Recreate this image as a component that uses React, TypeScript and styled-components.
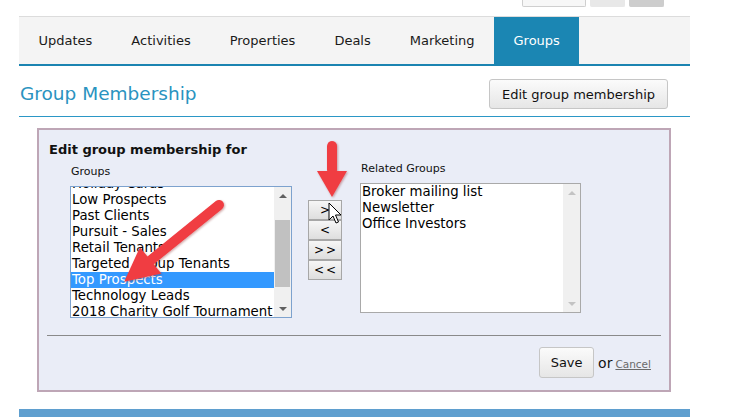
import React from "react";
import styled, { createGlobalStyle } from "styled-components";

const Global = createGlobalStyle`
  html, body { margin: 0; padding: 0; background: #ffffff; }
  body { font-family: Verdana, "DejaVu Sans", sans-serif; color: #111; }
  * { box-sizing: border-box; }
`;

const Page = styled.div`
  position: relative;
  width: 750px;
  height: 417px;
  overflow: hidden;
  padding-left: 19px;
`;

const Content = styled.div`
  width: 671px;
`;

const TopStrip = styled.div`
  height: 16px;
  display: flex;
  justify-content: flex-end;
  gap: 4px;
  padding-right: 26px;
`;

const MiniBtn = styled.div<{ $w: number; $bg: string; $border?: string }>`
  width: ${(p) => p.$w}px;
  height: 7px;
  background: ${(p) => p.$bg};
  border: 1px solid ${(p) => p.$border || p.$bg};
  border-top: none;
  border-radius: 0 0 2px 2px;
`;

const TabBar = styled.nav`
  display: flex;
  background: #f4f4f4;
  border-top: 1px solid #dcdcdc;
  border-bottom: 2px solid #1b84b1;
`;

const Tab = styled.div<{ $active?: boolean }>`
  height: 47px;
  line-height: 47px;
  padding: 0 19.5px;
  font-size: 13px;
  color: ${(p) => (p.$active ? "#ffffff" : "#1a1a1a")};
  background: ${(p) => (p.$active ? "#1b86b3" : "transparent")};
`;

const HeadingRow = styled.div`
  height: 51px;
  display: flex;
  justify-content: space-between;
  align-items: flex-start;
  border-bottom: 1px solid #2b97c6;
`;

const Heading = styled.h2`
  margin: 0;
  padding: 16px 0 0 1px;
  font-size: 18.5px;
  line-height: 24px;
  font-weight: normal;
  color: #2a93c0;
`;

const GreyButton = styled.button<{ $h: number; $w?: number }>`
  font-family: Verdana, "DejaVu Sans", sans-serif;
  font-size: 13px;
  color: #111;
  height: ${(p) => p.$h}px;
  ${(p) => (p.$w ? `width: ${p.$w}px;` : "padding: 0 12px;")}
  background: linear-gradient(#fbfbfb, #e6e6e6);
  border: 1px solid #c6c6c6;
  border-radius: 3px;
  cursor: pointer;
`;

const HeaderButton = styled(GreyButton)`
  margin: 13px 22px 0 0;
`;

const Panel = styled.section`
  margin: 11px 0 0 18px;
  width: 634px;
  height: 264px;
  background: #eaedf7;
  border: 2px solid #bea6b6;
  padding: 12px 7px 0 10px;
`;

const PanelTitle = styled.div`
  font-size: 13px;
  font-weight: bold;
  line-height: 16px;
`;

const PickRow = styled.div`
  display: flex;
  align-items: flex-start;
  margin: 2px 0 0 21px;
`;

const Column = styled.div<{ $top: number; $w: number; $left?: number }>`
  padding-top: ${(p) => p.$top}px;
  margin-left: ${(p) => p.$left || 0}px;
  width: ${(p) => p.$w}px;
  display: flex;
  flex-direction: column;
  gap: 7px;
`;

const FieldLabel = styled.div`
  font-size: 11px;
  line-height: 14px;
  padding-left: 1px;
`;

const ListBox = styled.div<{ $h: number; $focus?: boolean }>`
  position: relative;
  height: ${(p) => p.$h}px;
  background: #fff;
  border: 1px solid ${(p) => (p.$focus ? "#7da2ce" : "#a9a9a9")};
  display: flex;
  overflow: hidden;
`;

const Items = styled.div<{ $offset: number }>`
  flex: 1;
  min-width: 0;
  margin-top: ${(p) => p.$offset}px;
`;

const Item = styled.div<{ $sel?: boolean }>`
  height: 16px;
  line-height: 16px;
  font-size: 13.3px;
  padding-left: 1px;
  white-space: nowrap;
  overflow: hidden;
  color: ${(p) => (p.$sel ? "#fff" : "#000")};
  background: ${(p) => (p.$sel ? "#3399ff" : "transparent")};
`;

const ScrollBar = styled.div`
  width: 17px;
  flex: none;
  background: #f0f0f0;
  display: flex;
  flex-direction: column;
  align-items: center;
`;

const ScrollArrow = styled.div<{ $down?: boolean; $dim?: boolean }>`
  height: 17px;
  width: 17px;
  display: flex;
  align-items: center;
  justify-content: center;
  &::after {
    content: "";
    width: 0;
    height: 0;
    border-left: 4px solid transparent;
    border-right: 4px solid transparent;
    ${(p) => (p.$down ? "border-top" : "border-bottom")}: 4px solid
      ${(p) => (p.$dim ? "#c3c3c3" : "#606060")};
  }
`;

const Track = styled.div`
  flex: 1;
  width: 100%;
  display: flex;
  flex-direction: column;
`;

const Thumb = styled.div<{ $top: number; $h: number }>`
  margin: ${(p) => p.$top}px 1px 0 1px;
  height: ${(p) => p.$h}px;
  background: #c1c1c1;
`;

const MoveButtons = styled.div`
  margin: 40px 0 0 16px;
  display: flex;
  flex-direction: column;
  width: 34px;
  flex: none;
`;

const MoveButton = styled.button`
  height: 20px;
  width: 34px;
  padding: 0;
  font-family: Verdana, "DejaVu Sans", sans-serif;
  font-size: 12px;
  letter-spacing: 2px;
  text-indent: 2px;
  color: #000;
  background: linear-gradient(#f6f6f6, #dedede);
  border: 1px solid #a7a7a7;
`;

const Divider = styled.hr`
  margin: 17px 0 0 -2px;
  width: 614px;
  border: none;
  border-top: 1px solid #8a8a8a;
`;

const Footer = styled.div`
  display: flex;
  justify-content: flex-end;
  align-items: center;
  gap: 3px;
  margin-top: 11px;
  padding-right: 11px;
`;

const OrText = styled.span`
  font-size: 14px;
  margin-left: 1px;
`;

const CancelLink = styled.a`
  font-size: 10.5px;
  color: #6a6a6a;
  text-decoration: underline;
  margin-top: 2px;
`;

const BottomBar = styled.div`
  margin-top: 17px;
  height: 12px;
  background: #5f9fcf;
`;

const Overlay = styled.svg`
  position: absolute;
  left: 0;
  top: 0;
  pointer-events: none;
`;

const groups = [
  "Holiday Cards",
  "Low Prospects",
  "Past Clients",
  "Pursuit - Sales",
  "Retail Tenants",
  "Targeted Group Tenants",
  "Top Prospects",
  "Technology Leads",
  "2018 Charity Golf Tournament",
];

const related = ["Broker mailing list", "Newsletter", "Office Investors"];

const tabs = ["Updates", "Activities", "Properties", "Deals", "Marketing", "Groups"];

export default function App() {
  return (
    <>
      <Global />
      <Page>
        <Content>
          <TopStrip>
            <MiniBtn $w={64} $bg="#f7f7f7" $border="#cfcfcf" />
            <MiniBtn $w={35} $bg="#e8e8e8" />
            <MiniBtn $w={35} $bg="#cdcdcd" />
          </TopStrip>
          <TabBar>
            {tabs.map((t) => (
              <Tab key={t} $active={t === "Groups"}>
                {t}
              </Tab>
            ))}
          </TabBar>
          <HeadingRow>
            <Heading>Group Membership</Heading>
            <HeaderButton $h={30}>Edit group membership</HeaderButton>
          </HeadingRow>
          <Panel>
            <PanelTitle>Edit group membership for</PanelTitle>
            <PickRow>
              <Column $top={5} $w={222}>
                <FieldLabel>Groups</FieldLabel>
                <ListBox $h={132} $focus>
                  <Items $offset={-11}>
                    {groups.map((g) => (
                      <Item key={g} $sel={g === "Top Prospects"}>
                        {g}
                      </Item>
                    ))}
                  </Items>
                  <ScrollBar>
                    <ScrollArrow />
                    <Track>
                      <Thumb $top={16} $h={67} />
                    </Track>
                    <ScrollArrow $down />
                  </ScrollBar>
                </ListBox>
              </Column>
              <MoveButtons>
                <MoveButton>&gt;</MoveButton>
                <MoveButton>&lt;</MoveButton>
                <MoveButton>&gt;&gt;</MoveButton>
                <MoveButton>&lt;&lt;</MoveButton>
              </MoveButtons>
              <Column $top={2} $w={221} $left={18}>
                <FieldLabel>Related Groups</FieldLabel>
                <ListBox $h={130}>
                  <Items $offset={0}>
                    {related.map((g) => (
                      <Item key={g}>{g}</Item>
                    ))}
                  </Items>
                  <ScrollBar>
                    <ScrollArrow $dim />
                    <Track />
                    <ScrollArrow $down $dim />
                  </ScrollBar>
                </ListBox>
              </Column>
            </PickRow>
            <Divider />
            <Footer>
              <GreyButton $h={31} $w={55}>
                Save
              </GreyButton>
              <OrText>or</OrText>
              <CancelLink href="#">Cancel</CancelLink>
            </Footer>
          </Panel>
          <BottomBar />
        </Content>
        <Overlay width="750" height="417" viewBox="0 0 750 417">
          <defs>
            <filter id="sh" x="-20%" y="-20%" width="140%" height="140%">
              <feDropShadow dx="1" dy="1" stdDeviation="1" floodColor="#7a1010" floodOpacity="0.35" />
            </filter>
          </defs>
          <g filter="url(#sh)" fill="#f03c42">
            <g transform="translate(219 205) rotate(141)">
              <rect x="-5" y="-5" width="100" height="10" rx="5" />
              <polygon points="88,-17 122,0 88,17" />
            </g>
            <g transform="translate(332 146) rotate(90)">
              <rect x="-5" y="-5" width="34" height="10" rx="5" />
              <polygon points="25,-15 51,0 25,15" />
            </g>
          </g>
          <path
            d="M329 203 L329 220 L333 216 L336 223 L338.5 222 L335.5 215 L341 215 Z"
            fill="#ffffff"
            stroke="#000000"
            strokeWidth="1"
            strokeLinejoin="round"
          />
        </Overlay>
      </Page>
    </>
  );
}
